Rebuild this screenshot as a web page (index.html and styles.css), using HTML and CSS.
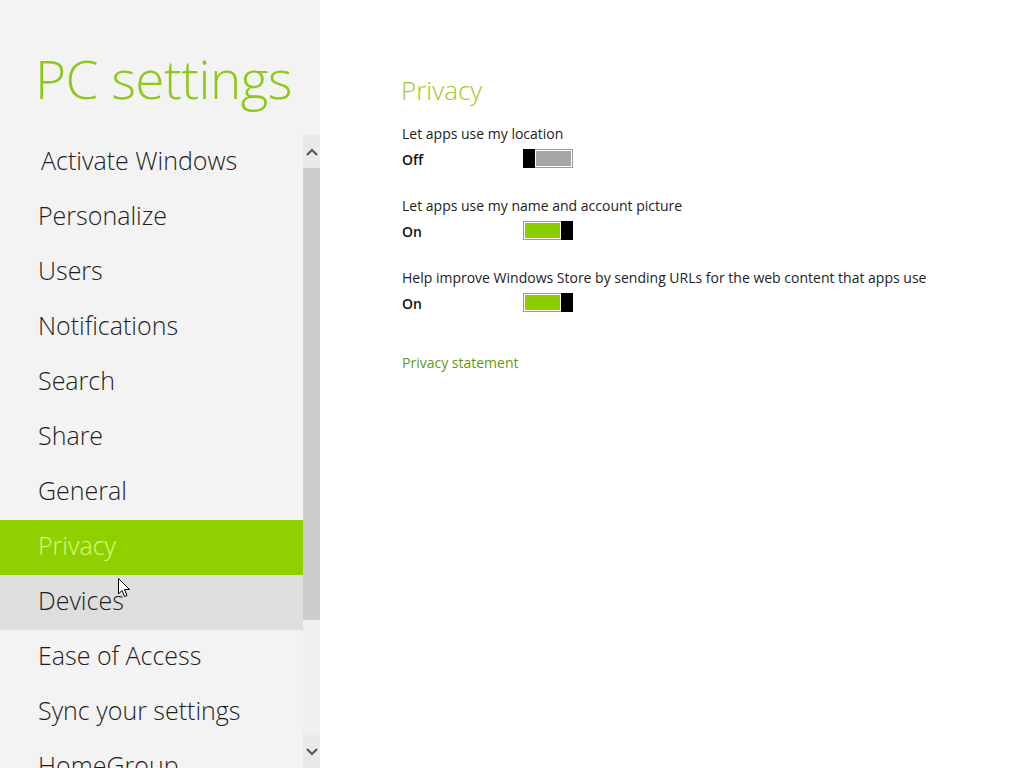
FILE: index.html
```html
<!DOCTYPE html>
<html lang="en">
<head>
    <meta charset="UTF-8">
    <title>PC settings</title>
    <link rel="stylesheet" href="styles.css">
</head>
<body>
    <div class="sidebar">
        <h1 class="title">PC settings</h1>
        <div class="nav-wrap">
            <ul class="nav">
                <li class="nav-item first">Activate Windows</li>
                <li class="nav-item">Personalize</li>
                <li class="nav-item">Users</li>
                <li class="nav-item">Notifications</li>
                <li class="nav-item">Search</li>
                <li class="nav-item">Share</li>
                <li class="nav-item">General</li>
                <li class="nav-item selected">Privacy</li>
                <li class="nav-item hover">Devices</li>
                <li class="nav-item">Ease of Access</li>
                <li class="nav-item">Sync your settings</li>
                <li class="nav-item">HomeGroup</li>
            </ul>
            <div class="scrollbar">
                <div class="scroll-btn">
                    <svg width="12" height="8" viewBox="0 0 12 8"><path d="M1 7 L6 2 L11 7" fill="none" stroke="#555" stroke-width="2"/></svg>
                </div>
                <div class="scroll-thumb"></div>
                <div class="scroll-track"></div>
                <div class="scroll-btn">
                    <svg width="12" height="8" viewBox="0 0 12 8"><path d="M1 1 L6 6 L11 1" fill="none" stroke="#555" stroke-width="2"/></svg>
                </div>
            </div>
        </div>
    </div>

    <div class="content">
        <h2 class="section-title">Privacy</h2>

        <div class="setting">
            <div class="setting-label">Let apps use my location</div>
            <div class="setting-row">
                <span class="state">Off</span>
                <div class="toggle off">
                    <div class="thumb"></div>
                    <div class="track"><div class="fill"></div></div>
                </div>
            </div>
        </div>

        <div class="setting">
            <div class="setting-label">Let apps use my name and account picture</div>
            <div class="setting-row">
                <span class="state">On</span>
                <div class="toggle on">
                    <div class="track"><div class="fill"></div></div>
                    <div class="thumb"></div>
                </div>
            </div>
        </div>

        <div class="setting">
            <div class="setting-label">Help improve Windows Store by sending URLs for the web content that apps use</div>
            <div class="setting-row">
                <span class="state">On</span>
                <div class="toggle on">
                    <div class="track"><div class="fill"></div></div>
                    <div class="thumb"></div>
                </div>
            </div>
        </div>

        <a class="link" href="#">Privacy statement</a>
    </div>

    <!-- mouse pointer -->
    <svg class="cursor" width="13" height="20" viewBox="0 0 13 20">
        <path d="M0.5 0.5 L0.5 16 L4 12.5 L6.5 18.5 L9 17.5 L6.5 11.5 L11.5 11.5 Z" fill="#fff" stroke="#000" stroke-width="1"/>
    </svg>
</body>
</html>
```

FILE: styles.css
```css
html, body {
    margin: 0;
    padding: 0;
    height: 768px;
    overflow: hidden;
}
body {
    display: flex;
    font-family: "Open Sans", "Noto Sans", sans-serif;
    background: #ffffff;
    color: #222;
    position: relative;
}
.sidebar {
    width: 320px;
    background-color: #f3f3f3;
    display: flex;
    flex-direction: column;
    height: 768px;
}
.title {
    margin: 0;
    padding: 41px 0 0 35px;
    height: 91px;
    box-sizing: border-box;
    font-size: 53px;
    font-weight: 300;
    line-height: 76px;
    color: #8cc918;
    letter-spacing: -0.5px;
}
.nav-wrap {
    display: flex;
    flex: 1;
    margin-top: 44px;
    overflow: hidden;
}
.nav {
    list-style: none;
    margin: 0;
    padding: 0;
    width: 303px;
}
.nav-item {
    height: 55px;
    line-height: 51px;
    padding-left: 38px;
    font-size: 25px;
    font-weight: 300;
    color: #1e1e1e;
    white-space: nowrap;
}
.nav-item.first {
    padding-left: 41px;
}
.nav-item.selected {
    background-color: #8fd000;
    color: #d6f782;
}
.nav-item.hover {
    background-color: #dedede;
}
.scrollbar {
    width: 17px;
    display: flex;
    flex-direction: column;
    background-color: #e9e9e9;
}
.scroll-btn {
    height: 33px;
    display: flex;
    align-items: center;
    justify-content: center;
}
.scroll-thumb {
    height: 452px;
    background-color: #cdcdcd;
}
.scroll-track {
    flex: 1;
    background-color: #efefef;
}
.content {
    flex: 1;
    padding: 72px 0 0 81px;
}
.section-title {
    margin: 0 0 16px 0;
    font-size: 26px;
    font-weight: 300;
    line-height: 36px;
    color: #9ccb2a;
}
.setting {
    margin-bottom: 23px;
}
.setting-label {
    font-size: 14px;
    line-height: 20px;
    color: #222;
    padding-left: 1px;
}
.setting-row {
    display: flex;
    align-items: center;
    height: 29px;
}
.state {
    width: 121px;
    padding-top: 2px;
    font-size: 14px;
    font-weight: 600;
    color: #111;
    padding-left: 1px;
}
.toggle {
    display: flex;
    width: 50px;
    height: 19px;
}
.toggle .thumb {
    width: 12px;
    background-color: #000;
}
.toggle .track {
    flex: 1;
    border: 1px solid #9a9a9a;
    padding: 1px;
    background: #fff;
}
.toggle.off .track {
    border-left: none;
}
.toggle.on .track {
    border-right: none;
}
.toggle .fill {
    height: 100%;
}
.toggle.off .fill {
    background-color: #a6a6a6;
}
.toggle.on .fill {
    background-color: #8ccd00;
}
.link {
    display: inline-block;
    margin-top: 13px;
    font-size: 14px;
    color: #5f9a14;
    text-decoration: none;
    padding-left: 1px;
}
.cursor {
    position: absolute;
    left: 118px;
    top: 578px;
}
```
